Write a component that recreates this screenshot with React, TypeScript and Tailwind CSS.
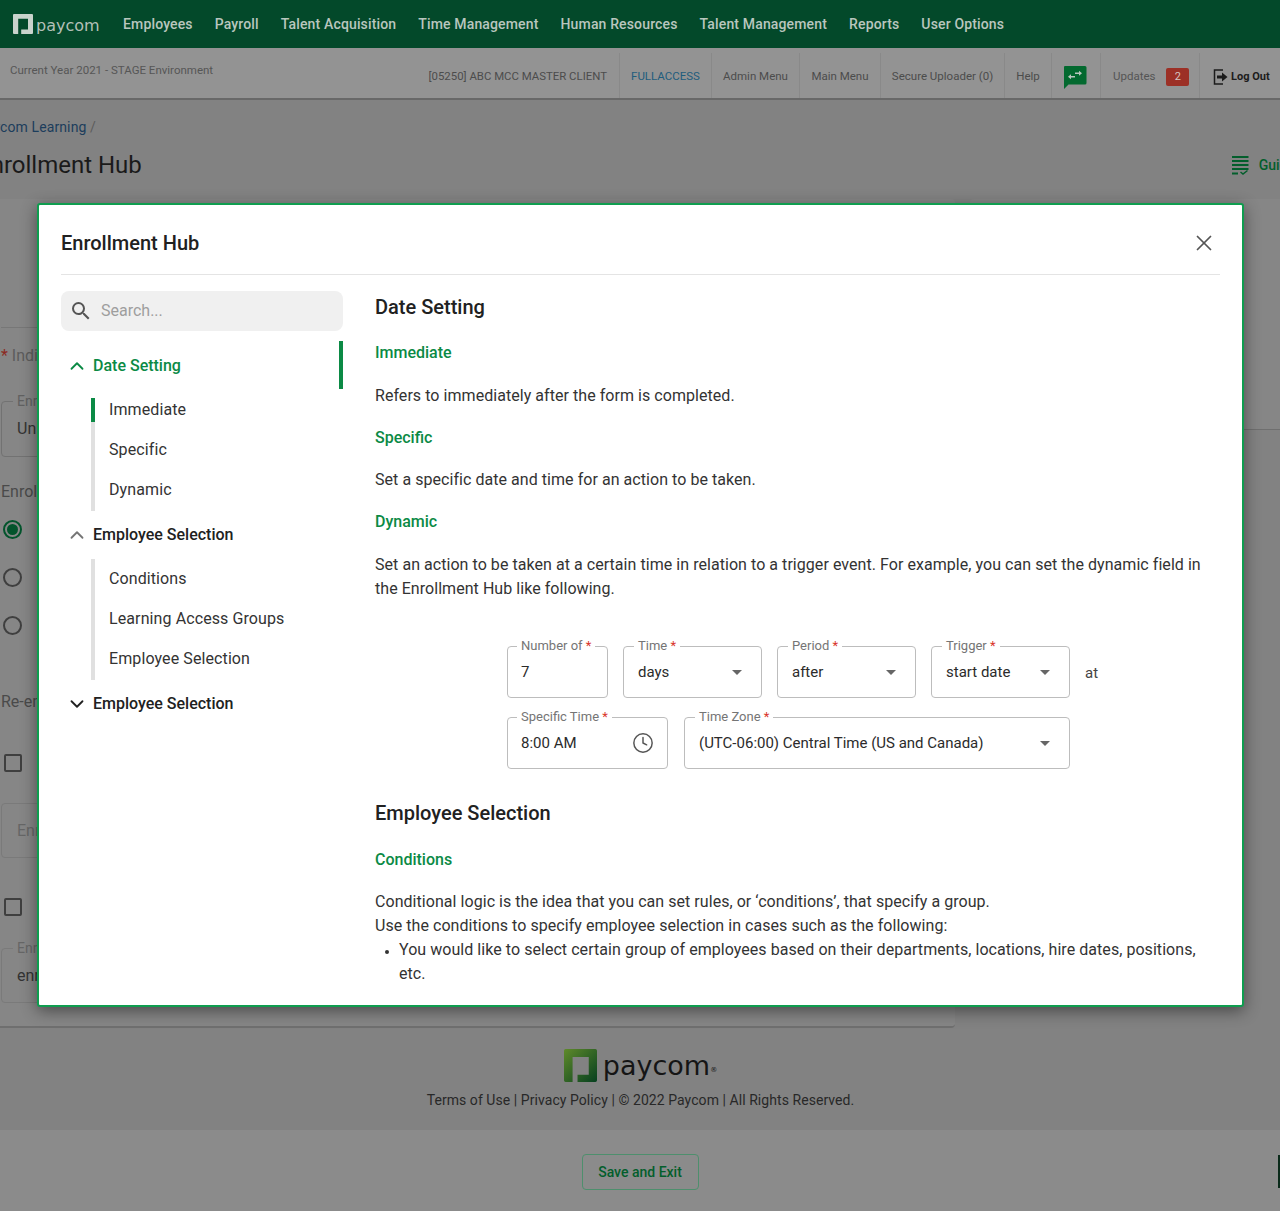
import { ChevronDown, ChevronUp, Clock, X } from "lucide-react";

const navItems = ["Employees", "Payroll", "Talent Acquisition", "Time Management", "Human Resources", "Talent Management", "Reports", "User Options"];

function Logo({ size, from, to }: { size: number; from: string; to: string }) {
  const id = `logo-${size}`;
  return (
    <svg width={size} height={size} viewBox="0 0 100 100" className="shrink-0">
      <defs>
        <linearGradient id={id} x1="0" y1="0" x2="1" y2="1">
          <stop offset="0" stopColor={from} />
          <stop offset="1" stopColor={to} />
        </linearGradient>
      </defs>
      <path
        fillRule="evenodd"
        fill={`url(#${id})`}
        d="M5 0H95A5 5 0 0 1 100 5V95A5 5 0 0 1 95 100H41V78H75V24H26V100H5A5 5 0 0 1 0 95V5A5 5 0 0 1 5 0Z"
      />
    </svg>
  );
}

function Caret() {
  return (
    <svg width="10" height="5" viewBox="0 0 10 5" className="shrink-0">
      <path d="M0 0H10L5 5Z" fill="#666666" />
    </svg>
  );
}

function Field({ label, width, value, select, clock }: { label: string; width: string; value: string; select?: boolean; clock?: boolean }) {
  return (
    <div className={`relative flex h-[52px] items-center justify-between rounded border border-[#bdbdbd] text-[15px] text-[#2b2b2b] ${width} ${select ? "pl-[14px] pr-[19px]" : "pl-[13px] pr-[13px]"}`}>
      <span className={`absolute top-[-10px] bg-white px-[4px] text-[13px] leading-[18px] text-[#757575] ${select ? "left-[10px]" : "left-[9px]"}`}>
        {label} <span className="text-[#d9362b]">*</span>
      </span>
      <span>{value}</span>
      {select && <Caret />}
      {clock && <Clock size={22} strokeWidth={1.6} className="text-[#555555]" />}
    </div>
  );
}

function SubItem({ label, active }: { label: string; active?: boolean }) {
  return (
    <div className="relative h-[24px] pl-[14px] text-[16px] leading-[24px] tracking-[0.1px] text-[#333333]">
      {active && <div className="absolute left-[-4px] top-0 h-[24px] w-[4px] bg-[#0b8a45]" />}
      {label}
    </div>
  );
}

function Heading({ children, className }: { children: string; className: string }) {
  return <div className={`text-[16px] font-medium leading-[24px] tracking-normal text-[#0b8a45] ${className}`}>{children}</div>;
}

export default function App() {
  return (
    <div className="relative h-[1211px] w-[1280px] overflow-hidden bg-[#828282] font-['Roboto',sans-serif]">
      {/* top nav */}
      <div className="flex h-[48px] items-center bg-[#03492a] pl-[13px]">
        <div className="flex w-[110px] items-center gap-[3px]">
          <Logo size={20} from="#c9d3cc" to="#c9d3cc" />
          <span className="mt-[3px] font-['DejaVu_Sans',sans-serif] text-[16px] leading-[20px] text-[#b3c0b8]">paycom</span>
        </div>
        <div className="flex gap-[22px] text-[14px] font-medium tracking-[0.15px] text-[#b9c6be]">
          {navItems.map((n) => (
            <span key={n}>{n}</span>
          ))}
        </div>
      </div>

      {/* environment bar */}
      <div className="flex h-[52px] items-stretch border-b-2 border-[#686868] bg-[#939393] text-[11.5px] text-[#4c4c4c]">
        <div className="pl-[10px] pt-[15px] leading-[14px] text-[#565656]">Current Year 2021 - STAGE Environment</div>
        <div className="ml-auto mt-[5px] flex items-stretch [&>div]:pt-[3px]">
          <div className="flex items-center pr-[12px] text-[11.4px]">[05250] ABC MCC MASTER CLIENT</div>
          <div className="flex w-[92px] items-center justify-center border-l border-[#898989] text-[#1f5d7d]">FULLACCESS</div>
          <div className="flex w-[88px] items-center justify-center border-l border-[#898989]">Admin Menu</div>
          <div className="flex w-[81px] items-center justify-center border-l border-[#898989]">Main Menu</div>
          <div className="flex w-[124px] items-center justify-center border-l border-[#898989]">Secure Uploader (0)</div>
          <div className="flex w-[47px] items-center justify-center border-l border-[#898989]">Help</div>
          <div className="flex w-[49px] items-center justify-center border-l border-[#898989] pr-[2px]">
            <svg width="24" height="24" viewBox="0 0 24 24">
              <path d="M2 1H22A1.5 1.5 0 0 1 23.5 2.500V18A1.500 1.500 0 0 1 22 19.500H5.500L1 24V2A1 1 0 0 1 2 1Z" fill="#03692f" />
              <path d="M12 7.500H16V5.800L19 8.300L16 10.800V9H12ZM12 11H8V9.300L5 11.800L8 14.300V12.500H12Z" fill="#b9c6be" />
            </svg>
          </div>
          <div className="flex w-[99px] items-center border-l border-[#898989] pl-[12px]">
            <span className="text-[#555555]">Updates</span>
            <span className="ml-[11px] flex h-[18px] w-[23px] items-center justify-center rounded-[2px] bg-[#9c3026] text-[11px] text-[#d5c5c2]">2</span>
          </div>
          <div className="flex w-[81px] items-center gap-[3px] border-l border-[#898989] pl-[13px] font-bold text-[#1c1c1c]">
            <svg width="15" height="16" viewBox="0 0 15 16" className="shrink-0">
              <path d="M10 1H1.500V15H10" fill="none" stroke="#1c1c1c" strokeWidth="1.500" />
              <path d="M4 6.500H9V3.500L14.500 8L9 12.500V9.500H4Z" fill="#1c1c1c" />
            </svg>
            <span className="text-[11px]">Log Out</span>
          </div>
        </div>
      </div>

      {/* page behind the dialog */}
      <div className="ml-[-23px] flex h-[1030px] w-[1340px] flex-col">
        <div className="mt-[17px] text-[14px] leading-[20px] tracking-[0.1px] text-[#1c3d5c]">
          Paycom Learning <span className="text-[#5c5c5c]">/</span>
        </div>
        <div className="mt-[12px] flex h-[32px] items-center justify-between pr-[22px]">
          <span className="text-[24px] leading-[32px] text-[#1a1a1a]">Enrollment Hub</span>
          <span className="flex items-center gap-[10px] text-[14px] font-medium text-[#035e2c]">
            <svg width="17" height="19" viewBox="0 0 17 19">
              <path d="M0 1H16.500M0 5H16.500M0 9H16.500M0 13H16.500M0 17.500H6" stroke="#035e2c" strokeWidth="1.800" fill="none" />
              <path d="M8.500 16L11 18L15.500 14.500" stroke="#035e2c" strokeWidth="1.500" fill="none" />
            </svg>
            Guide
          </span>
        </div>

        <div className="mt-[18px] flex items-start gap-[15px]">
          <div className="h-[829px] w-[978px] rounded border-b-2 border-[#6f6f6f] bg-[#868686] pl-[24px] text-[16px] text-[#4a4a4a]">
            <div className="mt-[128px] h-px bg-[#777777]" />
            <div className="mt-[16px] leading-[24px] text-[#5c5c5c]">
              <span className="text-[#8c2a22]">*</span> Individual Enrollment
            </div>
            <div className="relative mt-[33px] flex h-[56px] items-center rounded border border-[#727272] pl-[15px] text-[#333333]">
              <span className="absolute left-[11px] top-[-11px] bg-[#868686] px-[4px] text-[14px] text-[#616161]">Enrollment Type</span>
              Unlimited
            </div>
            <div className="mt-[23px] leading-[24px]">Enrollment Option</div>
            <div className="ml-[2px] mt-[16px] flex h-[19px] w-[19px] items-center justify-center rounded-full border-2 border-[#03542c]">
              <div className="h-[11px] w-[11px] rounded-full bg-[#03542c]" />
            </div>
            <div className="ml-[2px] mt-[29px] h-[19px] w-[19px] rounded-full border-2 border-[#3f3f3f]" />
            <div className="ml-[2px] mt-[29px] h-[19px] w-[19px] rounded-full border-2 border-[#3f3f3f]" />
            <div className="mt-[55px] leading-[24px]">Re-enrollment</div>
            <div className="ml-[3px] mt-[40px] h-[18px] w-[18px] rounded-[2px] border-2 border-[#3f3f3f]" />
            <div className="mt-[31px] flex h-[55px] items-center rounded border border-[#7a7a7a] pl-[15px] text-[#666666]">Enrollment</div>
            <div className="ml-[3px] mt-[40px] h-[18px] w-[18px] rounded-[2px] border-2 border-[#3f3f3f]" />
            <div className="relative mt-[32px] flex h-[55px] items-center rounded border border-[#7a7a7a] pl-[15px] text-[#333333]">
              <span className="absolute left-[11px] top-[-11px] bg-[#868686] px-[4px] text-[14px] text-[#666666]">Enrollment</span>
              enrollment
            </div>
          </div>
          <div className="h-[231px] flex-1 rounded border-b border-[#6f6f6f] bg-[#868686]" />
        </div>

        <div className="mt-[21px] flex justify-center pl-[47px] pr-[60px]">
          <div className="flex items-center gap-[6px]">
            <Logo size={33} from="#5f8a2a" to="#06401f" />
            <span className="font-['DejaVu_Sans',sans-serif] text-[27px] leading-[33px] text-[#151515]">
              paycom<sup className="text-[7px]">®</sup>
            </span>
          </div>
        </div>
        <div className="mt-[8px] pl-[47px] pr-[60px] text-center text-[14px] leading-[20px] tracking-[0.06px] text-[#282828]">
          Terms of Use | Privacy Policy | © 2022 Paycom | All Rights Reserved.
        </div>
      </div>

      {/* save bar */}
      <div className="relative flex h-[81px] justify-center bg-[#8b8b8b] pt-[24px]">
        <div className="flex h-[36px] w-[117px] items-center justify-center rounded border border-[#4e8f6d] text-[14px] font-medium text-[#035e2c]">Save and Exit</div>
        <div className="absolute right-0 top-[25px] h-[33px] w-[2px] bg-[#0a2a1a]" />
      </div>

      {/* dialog */}
      <div className="absolute left-[37px] top-[203px] h-[804px] w-[1207px] overflow-hidden rounded-[3px] border-2 border-[#0f9d4f] bg-white px-[22px] shadow-[0_4px_16px_rgba(0,0,0,0.45)]">
        <div className="flex h-[70px] items-center justify-between border-b border-[#e4e4e4] pt-[6px]">
          <span className="text-[20px] font-medium text-[#212121]">Enrollment Hub</span>
          <X size={26} strokeWidth={1.6} className="mr-[3px] text-[#555555]" />
        </div>

        <div className="flex">
          <div className="w-[282px] shrink-0">
            <div className="mt-[16px] flex h-[40px] items-center gap-[8px] rounded-lg bg-[#f0f0f0] pl-[8px] text-[16px] text-[#9e9e9e]">
              <svg width="24" height="24" viewBox="0 0 24 24" fill="#555555">
                <path d="M15.500 14h-.79l-.28-.27A6.471 6.471 0 0 0 16 9.500 6.500 6.500 0 1 0 9.500 16c1.610 0 3.090-.59 4.230-1.570l.27.28v.79l5 4.990L20.490 19l-4.990-5zm-6 0C7.010 14 5 11.990 5 9.500S7.010 5 9.500 5 14 7.010 14 9.500 11.990 14 9.500 14z" />
              </svg>
              Search...
            </div>

            <div className="mt-[10px] flex h-[48px] items-center gap-[5px] border-r-4 border-[#0b8a45] pl-[5px] pt-[1px] text-[16px] font-medium text-[#0b8a45]">
              <ChevronUp size={22} strokeWidth={2} />
              Date Setting
            </div>
            <div className="ml-[30px] mt-[9px] flex flex-col gap-[16px] border-l-4 border-[#e0e0e0] pb-[9px]">
              <SubItem label="Immediate" active />
              <SubItem label="Specific" />
              <SubItem label="Dynamic" />
            </div>

            <div className="flex h-[48px] items-center gap-[5px] pl-[5px] text-[16px] font-medium text-[#212121]">
              <ChevronUp size={22} strokeWidth={2} className="text-[#757575]" />
              Employee Selection
            </div>
            <div className="ml-[30px] flex flex-col gap-[16px] border-l-4 border-[#e0e0e0] pb-[9px] pt-[8px]">
              <SubItem label="Conditions" />
              <SubItem label="Learning Access Groups" />
              <SubItem label="Employee Selection" />
            </div>

            <div className="flex h-[48px] items-center gap-[5px] pl-[5px] text-[16px] font-medium text-[#212121]">
              <ChevronDown size={22} strokeWidth={2} />
              Employee Selection
            </div>
          </div>

          <div className="ml-[32px] flex-1 text-[16px] leading-[24px] tracking-[0.05px] text-[#333333]">
            <div className="mt-[18px] text-[20px] font-medium leading-[28px] tracking-normal text-[#212121]">Date Setting</div>
            <Heading className="mt-[20px]">Immediate</Heading>
            <p className="mt-[19px]">Refers to immediately after the form is completed.</p>
            <Heading className="mt-[18px]">Specific</Heading>
            <p className="mt-[18px]">Set a specific date and time for an action to be taken.</p>
            <Heading className="mt-[18px]">Dynamic</Heading>
            <p className="mt-[19px]">
              Set an action to be taken at a certain time in relation to a trigger event. For example, you can set the dynamic field in the Enrollment Hub like following.
            </p>

            <div className="ml-[132px] mt-[45px] flex flex-col gap-[19px] tracking-normal">
              <div className="flex items-center gap-[15px]">
                <Field label="Number of" width="w-[101px]" value="7" />
                <Field label="Time" width="w-[139px]" value="days" select />
                <Field label="Period" width="w-[139px]" value="after" select />
                <Field label="Trigger" width="w-[139px]" value="start date" select />
                <span className="mt-[2px] text-[15px] text-[#444444]">at</span>
              </div>
              <div className="flex gap-[16px]">
                <Field label="Specific Time" width="w-[161px]" value="8:00 AM" clock />
                <Field label="Time Zone" width="w-[386px]" value="(UTC-06:00) Central Time (US and Canada)" select />
              </div>
            </div>

            <div className="mt-[30px] text-[20px] font-medium leading-[28px] tracking-normal text-[#212121]">Employee Selection</div>
            <Heading className="mt-[21px]">Conditions</Heading>
            <p className="mt-[18px]">Conditional logic is the idea that you can set rules, or ‘conditions’, that specify a group.</p>
            <p>Use the conditions to specify employee selection in cases such as the following:</p>
            <ul className="ml-[24px] list-disc marker:text-[12px] marker:text-[#333333]">
              <li>You would like to select certain group of employees based on their departments, locations, hire dates, positions, etc.</li>
            </ul>
          </div>
        </div>
      </div>
    </div>
  );
}
